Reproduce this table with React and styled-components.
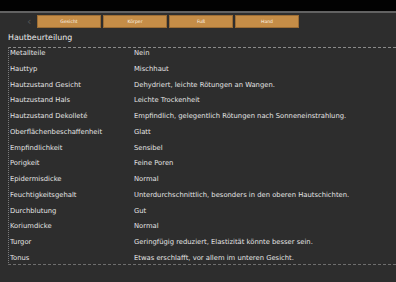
import styled, { createGlobalStyle } from "styled-components";

const GlobalStyle = createGlobalStyle`
  html, body {
    margin: 0;
    padding: 0;
    background: #2d2d2d;
  }
  body {
    font-family: "DejaVu Sans", "Liberation Sans", sans-serif;
    color: #e2e2e2;
  }
`;

const TABS = ["Gesicht", "Körper", "Fuß", "Hand"];

const ROWS = [
  ["Metallteile", "Nein"],
  ["Hauttyp", "Mischhaut"],
  ["Hautzustand Gesicht", "Dehydriert, leichte Rötungen an Wangen."],
  ["Hautzustand Hals", "Leichte Trockenheit"],
  ["Hautzustand Dekolleté", "Empfindlich, gelegentlich Rötungen nach Sonneneinstrahlung."],
  ["Oberflächenbeschaffenheit", "Glatt"],
  ["Empfindlichkeit", "Sensibel"],
  ["Porigkeit", "Feine Poren"],
  ["Epidermisdicke", "Normal"],
  ["Feuchtigkeitsgehalt", "Unterdurchschnittlich, besonders in den oberen Hautschichten."],
  ["Durchblutung", "Gut"],
  ["Koriumdicke", "Normal"],
  ["Turgor", "Geringfügig reduziert, Elastizität könnte besser sein."],
  ["Tonus", "Etwas erschlafft, vor allem im unteren Gesicht."],
];

export default function App() {
  return (
    <>
      <GlobalStyle />
      <Page>
        <TopBar />
        <TabRow>
          <Chevron>‹</Chevron>
          {TABS.map((t) => (
            <Tab key={t}>{t}</Tab>
          ))}
        </TabRow>
        <Heading>Hautbeurteilung</Heading>
        <Table>
          {ROWS.map(([label, value]) => (
            <Row key={label}>
              <Label>{label}</Label>
              <Value>{value}</Value>
            </Row>
          ))}
        </Table>
      </Page>
    </>
  );
}

const Page = styled.div`
  width: 396px;
  height: 282px;
  overflow: hidden;
  background: #2d2d2d;
`;

const TopBar = styled.div`
  height: 11px;
  background: #020202;
  border-bottom: 2px solid #626262;
`;

const TabRow = styled.div`
  display: flex;
  align-items: center;
  gap: 2px;
  margin-top: 2px;
  padding-left: 27px;
  height: 13px;
`;

const Chevron = styled.span`
  width: 8px;
  font-size: 11px;
  line-height: 13px;
  color: #555;
`;

const Tab = styled.div`
  width: 64px;
  height: 13px;
  box-sizing: border-box;
  background: #c58d47;
  border: 1px solid #9c6d35;
  color: #fbf3e6;
  font-size: 4.6px;
  line-height: 11px;
  text-align: center;
`;

const Heading = styled.h2`
  margin: 5px 0 0 8px;
  font-size: 7.9px;
  font-weight: normal;
  line-height: 10px;
  color: #ececec;
`;

const Table = styled.div`
  margin: 4px 0 0 8px;
  display: grid;
  row-gap: 6.75px;
  padding: 1px 0 1px;
  border-top: 1px dashed #8a8a8a;
  border-bottom: 1px dashed #6e6e6e;
  border-left: 1px dotted #7a7a7a;
`;

const Row = styled.div`
  display: grid;
  grid-template-columns: 125px 1fr;
  height: 9px;
  align-items: center;
  font-size: 6.8px;
  line-height: 9px;
  white-space: nowrap;
`;

const Label = styled.div`
  padding-left: 1px;
  color: #e4e4e4;
`;

const Value = styled.div`
  color: #e4e4e4;
`;
